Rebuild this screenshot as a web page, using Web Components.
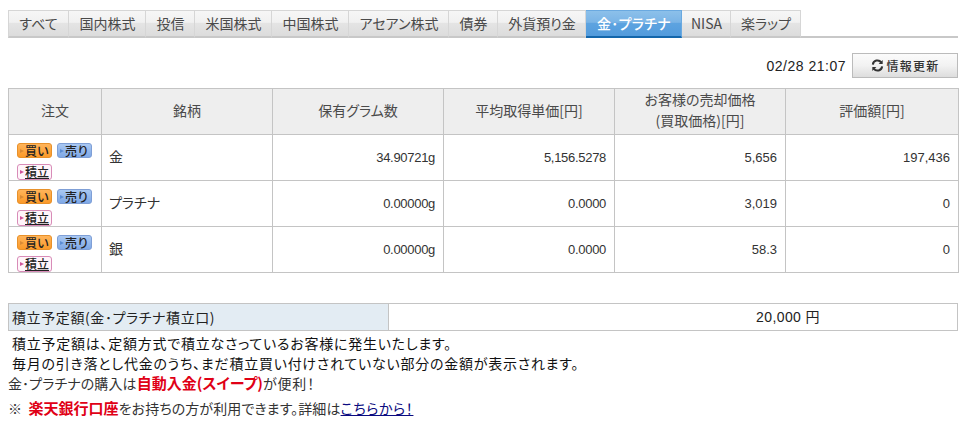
<!DOCTYPE html>
<html lang="ja">
<head>
<meta charset="utf-8">
<title>保有資産</title>
<style>
  html, body { margin: 0; background: #fff; }
  body { font-family: "Noto Sans CJK JP", "Liberation Sans", sans-serif; font-size: 13px; color: #333; }
</style>
</head>
<body>
<asset-page>
  <tab-bar>
    <tab-item w="61">すべて</tab-item>
    <tab-item w="77">国内株式</tab-item>
    <tab-item w="49">投信</tab-item>
    <tab-item w="77">米国株式</tab-item>
    <tab-item w="77">中国株式</tab-item>
    <tab-item w="100">アセアン株式</tab-item>
    <tab-item w="49">債券</tab-item>
    <tab-item w="88">外貨預り金</tab-item>
    <tab-item w="96" active>金･プラチナ</tab-item>
    <tab-item w="49">NISA</tab-item>
    <tab-item w="70">楽ラップ</tab-item>
  </tab-bar>
  <update-bar time="02/28 21:07"></update-bar>
  <holdings-table></holdings-table>
  <plan-summary label="積立予定額(金･プラチナ積立口)" value="20,000 円"></plan-summary>
  <note-block></note-block>
</asset-page>

<script>
const JP = '"Noto Sans CJK JP", "Liberation Sans", sans-serif';

class AssetPage extends HTMLElement {
  constructor() {
    super();
    this.attachShadow({ mode: 'open' }).innerHTML = `
      <style>
        :host { display: block; width: 950px; padding: 10px 6px 0 8px; }
      </style>
      <slot></slot>`;
  }
}

class TabBar extends HTMLElement {
  constructor() {
    super();
    this.attachShadow({ mode: 'open' }).innerHTML = `
      <style>
        :host { display: flex; height: 26px; border-bottom: 2px solid #c8c8c8; }
      </style>
      <slot></slot>`;
  }
}

class TabItem extends HTMLElement {
  constructor() {
    super();
    this.attachShadow({ mode: 'open' }).innerHTML = `
      <style>
        :host {
          display: flex; align-items: center; justify-content: center;
          box-sizing: border-box; height: 28px; flex: none;
          margin-bottom: -2px; padding: 0 0 2px 1px;
          font: 14px/1 ${JP}; font-feature-settings: "palt"; color: #4a4a4a;
          border: 1px solid #d6d6d6; border-left-width: 0; border-bottom: 2px solid #c8c8c8;
          background: linear-gradient(#f6f6f6 0, #f1f1f1 45%, #e4e4e4 50%, #dcdcdc 100%);
        }
        :host(:first-child) { border-left-width: 1px; padding-left: 0; }
        :host([active]) {
          color: #fff; font-weight: 500; letter-spacing: .3px; border-color: #6aa9e0; border-bottom-color: #1366ab;
          background: linear-gradient(#8cc0ea 0, #7ab4e6 45%, #5da3e0 50%, #529bdc 100%);
        }
      </style>
      <slot></slot>`;
  }
  connectedCallback() {
    this.style.width = this.getAttribute('w') + 'px';
  }
}

class UpdateBar extends HTMLElement {
  constructor() {
    super();
    this.attachShadow({ mode: 'open' });
  }
  connectedCallback() {
    this.shadowRoot.innerHTML = `
      <style>
        :host { display: flex; justify-content: flex-end; align-items: center; gap: 6px; margin-top: 15px; height: 25px; }
        .time { font: 14px/1 "Liberation Sans", sans-serif; letter-spacing: .5px; color: #222; }
        button {
          box-sizing: border-box; width: 106px; height: 25px; padding: 0; margin: 0;
          display: flex; align-items: center; justify-content: center; gap: 3px;
          border: 1px solid #bbb; background: linear-gradient(#fbfbfb, #f2f2f2 50%, #dddddd);
          font: 500 12px/1 ${JP}; letter-spacing: 1.2px; color: #333;
        }
        svg { width: 13px; height: 13px; flex: none; }
      </style>
      <span class="time">${this.getAttribute('time')}</span>
      <button>
        <svg viewBox="0 0 14 14" fill="none" stroke="#333" stroke-width="2.2">
          <path d="M2 6 A5 5 0 0 1 11 3.6"/>
          <path d="M12 8 A5 5 0 0 1 3 10.4"/>
          <path d="M12.6 1 V5.4 H8.2 Z" fill="#333" stroke="none"/>
          <path d="M1.4 13 V8.6 H5.8 Z" fill="#333" stroke="none"/>
        </svg>
        <span>情報更新</span>
      </button>`;
  }
}

class OrderButton extends HTMLElement {
  constructor() {
    super();
    this.attachShadow({ mode: 'open' }).innerHTML = `
      <style>
        :host {
          display: inline-flex; align-items: center; box-sizing: border-box;
          width: 35px; height: 15px; border-radius: 3px; border: 1px solid;
          padding-left: 2px; gap: 1px; flex: none;
          font: 500 12px/1 ${JP}; color: #222;
        }
        :host([kind="buy"]) { background: linear-gradient(#ffb45a, #fb9a2a); border-color: #e8912a; }
        :host([kind="sell"]) { background: linear-gradient(#a9c8f2, #7fa8e6); border-color: #7f9fd6; }
        :host([kind="plan"]) { background: #fff5fa; border-color: #d88cb8; height: 16px; }
        i { width: 0; height: 0; border-left: 4px solid; border-top: 2.5px solid transparent; border-bottom: 2.5px solid transparent; flex: none; }
        :host([kind="buy"]) i { border-left-color: #d98a35; }
        :host([kind="sell"]) i { border-left-color: #5c8dd4; }
        :host([kind="plan"]) i { border-left-color: #d0559a; }
        :host([kind="plan"]) span { text-decoration: underline; }
      </style>
      <i></i><span><slot></slot></span>`;
  }
}

const HOLDINGS = [
  ['金', '34.90721g', '5,156.5278', '5,656', '197,436'],
  ['プラチナ', '0.00000g', '0.0000', '3,019', '0'],
  ['銀', '0.00000g', '0.0000', '58.3', '0'],
];

class HoldingsTable extends HTMLElement {
  constructor() {
    super();
    this.attachShadow({ mode: 'open' });
  }
  connectedCallback() {
    const rows = HOLDINGS.map(r => `
      <tr>
        <td class="order">
          <div class="btns">
            <order-button kind="buy">買い</order-button>
            <order-button kind="sell">売り</order-button>
            <order-button kind="plan">積立</order-button>
          </div>
        </td>
        <td class="name">${r[0]}</td>
        <td class="num tight">${r[1]}</td>
        <td class="num tight">${r[2]}</td>
        <td class="num">${r[3]}</td>
        <td class="num">${r[4]}</td>
      </tr>`).join('');
    this.shadowRoot.innerHTML = `
      <style>
        :host { display: block; margin-top: 10px; }
        table { border-collapse: collapse; table-layout: fixed; width: 950px; color: #333; }
        th, td { border: 1px solid #c4c4c4; padding: 0; box-sizing: border-box; }
        th {
          height: 46px; background: #eeeeee; font: 400 14px/21px ${JP}; text-align: center;
          font-feature-settings: "palt"; color: #4a4a4a; padding-bottom: 3px;
        }
        td { height: 46px; font: 400 13px/1 "Liberation Sans", ${JP}; }
        .name { font: 400 14px/1 ${JP}; font-feature-settings: "palt"; padding-left: 7px; padding-bottom: 4px; }
        .num { text-align: right; padding-right: 8px; }
        .tight { letter-spacing: -.3px; }
        .order { vertical-align: top; }
        .btns { display: flex; flex-wrap: wrap; gap: 6px 5px; padding: 8px 0 0 8px; width: 84px; }
      </style>
      <table>
        <colgroup>
          <col style="width:93px"><col style="width:171px"><col style="width:171px">
          <col style="width:171px"><col style="width:171px"><col style="width:173px">
        </colgroup>
        <thead>
          <tr>
            <th>注文</th><th>銘柄</th><th>保有グラム数</th><th>平均取得単価[円]</th>
            <th>お客様の売却価格<br>(買取価格)[円]</th><th>評価額[円]</th>
          </tr>
        </thead>
        <tbody>${rows}</tbody>
      </table>`;
  }
}

class PlanSummary extends HTMLElement {
  constructor() {
    super();
    this.attachShadow({ mode: 'open' });
  }
  connectedCallback() {
    this.shadowRoot.innerHTML = `
      <style>
        :host {
          display: grid; grid-template-columns: 380px 1fr; height: 28px; box-sizing: border-box;
          margin-top: 30px; border: 1px solid #c4c4c4;
          font: 400 14px/26px ${JP}; color: #222;
        }
        .label { background: #e3ecf3; border-right: 1px solid #c4c4c4; padding-left: 3px; letter-spacing: .6px; font-feature-settings: "palt"; }
        .value { text-align: center; padding-left: 230px; font-family: "Liberation Sans", ${JP}; letter-spacing: .4px; }
      </style>
      <div class="label">${this.getAttribute('label')}</div>
      <div class="value">${this.getAttribute('value')}</div>`;
  }
}

class NoteBlock extends HTMLElement {
  constructor() {
    super();
    this.attachShadow({ mode: 'open' }).innerHTML = `
      <style>
        :host { display: block; margin-top: 2px; font: 400 14px/20px ${JP}; font-feature-settings: "palt"; color: #333; }
        .strong { color: #111; padding-left: 4px; letter-spacing: .75px; }
        .tip { height: 20px; letter-spacing: .1px; }
        .detail { margin-top: 5px; letter-spacing: .1px; }
        b { color: #e00016; font-weight: 700; font-size: 15px; letter-spacing: 0; }
        a { color: #0b0b80; text-decoration: underline; letter-spacing: .6px; }
        .end { letter-spacing: .8px; }
      </style>
      <div class="strong">積立予定額は、定額方式で積立なさっているお客様に発生いたします。</div>
      <div class="strong">毎月の引き落とし代金のうち、まだ積立買い付けされていない部分の金額が表示されます。</div>
      <div class="tip">金･プラチナの購入は<b>自動入金(スイープ)</b><span class="end">が便利！</span></div>
      <div class="detail">※ &nbsp;<b>楽天銀行口座</b>をお持ちの方が利用できます。詳細は<a href="#">こちらから！</a></div>`;
  }
}

customElements.define('asset-page', AssetPage);
customElements.define('tab-bar', TabBar);
customElements.define('tab-item', TabItem);
customElements.define('update-bar', UpdateBar);
customElements.define('order-button', OrderButton);
customElements.define('holdings-table', HoldingsTable);
customElements.define('plan-summary', PlanSummary);
customElements.define('note-block', NoteBlock);
</script>
</body>
</html>
